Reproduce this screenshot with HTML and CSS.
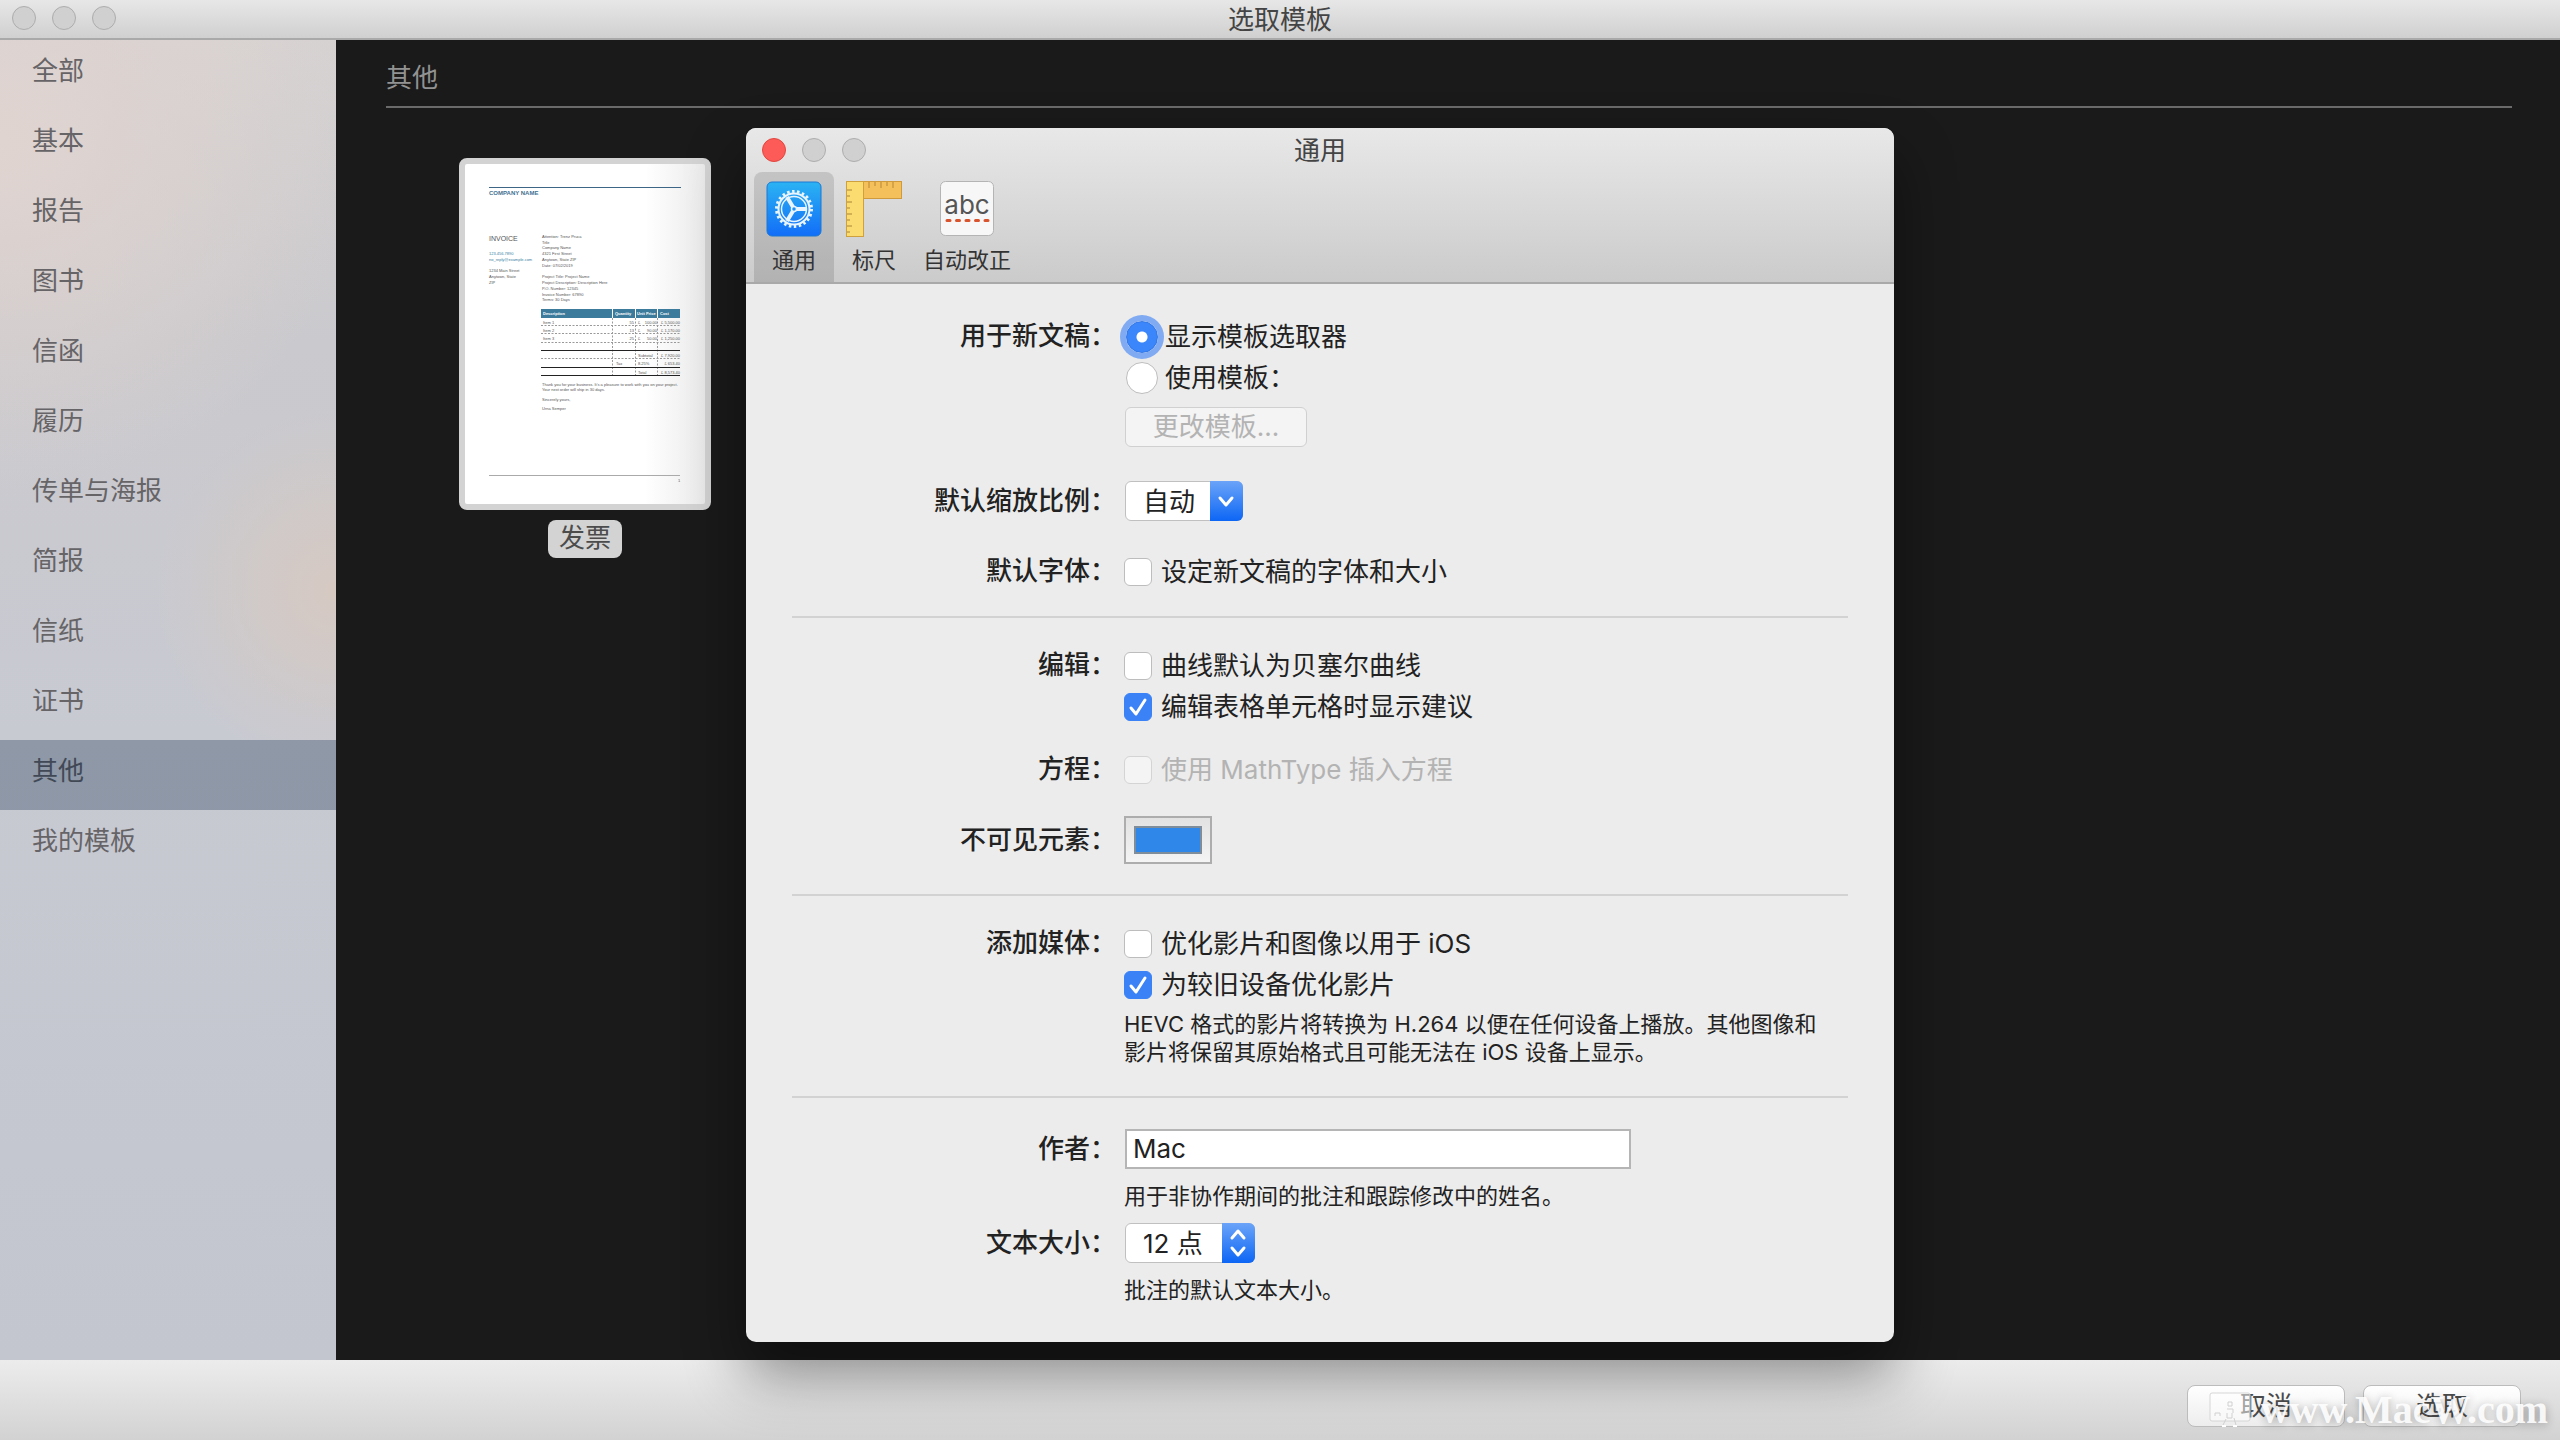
FILE: index.html
```
<!DOCTYPE html>
<html lang="zh-CN">
<head>
    <meta charset="UTF-8">
    <meta name="viewport" content="width=device-width, initial-scale=1.0">
    <title>选取模板</title>
    <link rel="stylesheet" href="styles.css">
</head>
<body>

<div class="window">
    <header class="titlebar">
        <div class="lights"><span></span><span></span><span></span></div>
        <h1>选取模板</h1>
    </header>

    <div class="content">
        <nav class="sidebar">
            <ul>
                <li><a href="#">全部</a></li>
                <li><a href="#">基本</a></li>
                <li><a href="#">报告</a></li>
                <li><a href="#">图书</a></li>
                <li><a href="#">信函</a></li>
                <li><a href="#">履历</a></li>
                <li><a href="#">传单与海报</a></li>
                <li><a href="#">简报</a></li>
                <li><a href="#">信纸</a></li>
                <li><a href="#">证书</a></li>
                <li><a href="#" class="active">其他</a></li>
                <li><a href="#">我的模板</a></li>
            </ul>
        </nav>

        <main class="templates">
            <h2>其他</h2>
            <figure class="template">
                <svg class="paper" viewBox="0 0 240 340">
                    <defs>
                        <linearGradient id="paperShade">
                            <stop offset="0.75" stop-color="#fff"/>
                            <stop offset="1" stop-color="#ebebeb"/>
                        </linearGradient>
                    </defs>
                    <rect width="240" height="340" fill="url(#paperShade)"/>
                    <path d="M24 23.5H216" stroke="#3d6585"/>
                    <text x="24" y="31" font-size="6" font-weight="bold" fill="#3f7192">COMPANY NAME</text>
                    <text x="24" y="77" font-size="7" fill="#555">INVOICE</text>
                    <g fill="#3a7f9f">
                        <text x="24" y="91">123.456.7890</text>
                        <text x="24" y="97">no_reply@example.com</text>
                    </g>
                    <text x="24" y="108">1234 Main Street</text>
                    <text x="24" y="114">Anytown, State</text>
                    <text x="24" y="120">ZIP</text>

                    <text x="77" y="74">Attention: Trenz Pruca</text>
                    <text x="77" y="80">Title</text>
                    <text x="77" y="85">Company Name</text>
                    <text x="77" y="91">4321 First Street</text>
                    <text x="77" y="97">Anytown, State ZIP</text>
                    <text x="77" y="103">Date: 07/02/2019</text>
                    <text x="77" y="114">Project Title: Project Name</text>
                    <text x="77" y="120">Project Description: Description Here</text>
                    <text x="77" y="126">P.O. Number: 12345</text>
                    <text x="77" y="132">Invoice Number: 67890</text>
                    <text x="77" y="137">Terms: 30 Days</text>

                    <rect x="76" y="145" width="139" height="9" fill="#3c7b9c"/>
                    <path d="M147.5 145v9M170.5 145v9M192.5 145v9" stroke="#fff"/>
                    <g fill="#fff" font-weight="bold">
                        <text x="78" y="151">Description</text>
                        <text x="150" y="151">Quantity</text>
                        <text x="172" y="151">Unit Price</text>
                        <text x="195" y="151">Cost</text>
                    </g>
                    <g stroke="#999" stroke-dasharray="2 1.5">
                        <path d="M76 161.5H215M76 169.5H215M76 178.5H215M76 194.5H215"/>
                        <path d="M147.5 154v58M170.5 154v58M192.5 154v58"/>
                    </g>
                    <path d="M76 186.5H215M76 203.5H215M76 211.5H215" stroke="#222"/>
                    <text x="78" y="160">Item 1</text>
                    <text x="78" y="168">Item 2</text>
                    <text x="78" y="176">Item 3</text>
                    <g text-anchor="end">
                        <text x="169" y="160">55</text>
                        <text x="169" y="168">13</text>
                        <text x="169" y="176">25</text>
                        <text x="192" y="160">100.00</text>
                        <text x="192" y="168">90.00</text>
                        <text x="192" y="176">50.00</text>
                        <text x="215" y="160">£ 5,500.00</text>
                        <text x="215" y="168">£ 1,170.00</text>
                        <text x="215" y="176">£ 1,250.00</text>
                        <text x="215" y="193">£ 7,920.00</text>
                        <text x="215" y="201">£ 653.40</text>
                        <text x="215" y="210">£ 8,573.40</text>
                    </g>
                    <text x="173" y="160">£</text>
                    <text x="173" y="168">£</text>
                    <text x="173" y="176">£</text>
                    <text x="173" y="193">Subtotal</text>
                    <text x="151" y="201">Tax</text>
                    <text x="173" y="201">8.25%</text>
                    <text x="173" y="210">Total</text>

                    <text x="77" y="222">Thank you for your business. It’s a pleasure to work with you on your project.</text>
                    <text x="77" y="227">Your next order will ship in 30 days.</text>
                    <text x="77" y="237">Sincerely yours,</text>
                    <text x="77" y="246">Urna Semper</text>
                    <path d="M24 311.5H215" stroke="#aaa"/>
                    <text x="213" y="318">1</text>
                </svg>
                <figcaption>发票</figcaption>
            </figure>
        </main>
    </div>

    <footer class="bottombar">
        <button type="button">取消</button>
        <button type="button">选取</button>
        <div class="watermark">
            <svg viewBox="0 0 42 36" width="42" height="36">
                <rect x="1" y="1" width="40" height="28" rx="2" fill="#fff" fill-opacity="0.5" stroke="#d6d6d6"/>
                <path d="M19 10h4v4h-4zM18 17h6v4M18 21v5h5v-5M6 24v-3h5v3M14 33l3-6M27 33l-2-7" fill="none" stroke="#d0d0d0"/>
                <path d="M13 34h4M24 34h4" stroke="#fff" stroke-width="2"/>
            </svg>
            <span>www.MacW.com</span>
        </div>
    </footer>
</div>

<section class="prefs">
    <header class="prefs-head">
        <div class="prefs-title">
            <div class="lights"><span class="close"></span><span></span><span></span></div>
            <h1>通用</h1>
        </div>
        <div class="tabs">
            <button type="button" class="tab active">
                <svg viewBox="0 0 56 56">
                    <defs>
                        <linearGradient id="blueTile" x2="0" y2="1">
                            <stop offset="0" stop-color="#2bb3f3"/>
                            <stop offset="1" stop-color="#126df8"/>
                        </linearGradient>
                    </defs>
                    <rect x="1" y="1" width="54" height="54" rx="5" fill="url(#blueTile)" stroke="#1b79d6"/>
                    <g fill="none" stroke="#e8f4ff">
                        <circle cx="28" cy="28" r="17.5" stroke-width="3" stroke-dasharray="2.5 2.5"/>
                        <circle cx="28" cy="28" r="15.5" stroke-width="2"/>
                        <circle cx="28" cy="28" r="12.5" stroke-width="1.5"/>
                        <path d="M30 28h11M27 26l-6-10M27 30l-6 10" stroke-width="4"/>
                        <circle cx="28" cy="28" r="2.5" fill="#2090f5" stroke-width="1.5"/>
                    </g>
                </svg>
                <span>通用</span>
            </button>
            <button type="button" class="tab">
                <svg viewBox="0 0 56 56">
                    <rect x="17.5" y="0.5" width="38" height="17" fill="#f3c05c" stroke="#cf9a3c"/>
                    <path d="M23 1v6M29 1v4M35 1v6M41 1v4M47 1v6" stroke="#b98632"/>
                    <rect x="0.5" y="0.5" width="17" height="55" fill="#fbdc70" stroke="#cfa03e"/>
                    <path d="M1 9h5M1 15h3M1 21h5M1 27h3M1 33h5M1 39h3M1 45h5M1 51h3" stroke="#a98438"/>
                </svg>
                <span>标尺</span>
            </button>
            <button type="button" class="tab">
                <svg viewBox="0 0 56 56">
                    <rect x="1.5" y="0.5" width="53" height="54" rx="5" fill="#f7f7f7" stroke="#b4b4b4"/>
                    <text x="28" y="33" class="abc">abc</text>
                    <path d="M8 39.5h42" stroke="#d9532c" stroke-width="3" stroke-linecap="round" stroke-dasharray="3 6.5"/>
                </svg>
                <span>自动改正</span>
            </button>
        </div>
    </header>

    <form class="prefs-body">
        <div class="group">
            <div class="row">
                <div class="label">用于新文稿：</div>
                <div class="field">
                    <label class="radio"><input type="radio" name="newdoc" checked>显示模板选取器</label>
                    <label class="radio"><input type="radio" name="newdoc">使用模板：</label>
                    <button type="button" class="change" disabled>更改模板...</button>
                </div>
            </div>
            <div class="row zoom-row">
                <label class="label" for="zoom">默认缩放比例：</label>
                <div class="select combo">
                    <select id="zoom"><option>自动</option></select>
                    <svg viewBox="0 0 33 40"><path d="M10 17l6 7 6-7"/></svg>
                </div>
            </div>
            <div class="row">
                <div class="label">默认字体：</div>
                <div class="field">
                    <label class="check"><input type="checkbox">设定新文稿的字体和大小</label>
                </div>
            </div>
        </div>

        <div class="group">
            <div class="row">
                <div class="label">编辑：</div>
                <div class="field">
                    <label class="check"><input type="checkbox">曲线默认为贝塞尔曲线</label>
                    <label class="check"><input type="checkbox" checked>编辑表格单元格时显示建议</label>
                </div>
            </div>
            <div class="row equation-row">
                <div class="label">方程：</div>
                <div class="field">
                    <label class="check disabled"><input type="checkbox" disabled>使用 MathType 插入方程</label>
                </div>
            </div>
            <div class="row color-row">
                <label class="label" for="color">不可见元素：</label>
                <input type="color" id="color" value="#2f87e9">
            </div>
        </div>

        <div class="group">
            <div class="row">
                <div class="label">添加媒体：</div>
                <div class="field">
                    <label class="check"><input type="checkbox">优化影片和图像以用于 iOS</label>
                    <label class="check"><input type="checkbox" checked>为较旧设备优化影片</label>
                    <p class="hint">HEVC 格式的影片将转换为 H.264 以便在任何设备上播放。其他图像和影片将保留其原始格式且可能无法在 iOS 设备上显示。</p>
                </div>
            </div>
        </div>

        <div class="group author">
            <div class="row">
                <label class="label" for="author">作者：</label>
                <div class="field">
                    <input type="text" id="author" value="Mac">
                    <p class="hint">用于非协作期间的批注和跟踪修改中的姓名。</p>
                </div>
            </div>
            <div class="row">
                <label class="label" for="size">文本大小：</label>
                <div class="field">
                    <div class="select popup">
                        <select id="size"><option>12 点</option></select>
                        <svg viewBox="0 0 33 40"><path d="M10 15l6-7 6 7M10 25l6 7 6-7"/></svg>
                    </div>
                    <p class="hint">批注的默认文本大小。</p>
                </div>
            </div>
        </div>
    </form>
</section>

</body>
</html>
```
FILE: styles.css
```
* {
    box-sizing: border-box;
}

body {
    margin: 0;
    font-family: Inter, "Noto Sans CJK SC", sans-serif;
    font-size: 26px;
    line-height: 40px;
    color: #222;
}

h1, h2, p, ul, figure {
    margin: 0;
    padding: 0;
}

h1 {
    font-size: 26px;
    font-weight: normal;
    line-height: inherit;
    color: #444;
    text-align: center;
}

button, input, select {
    font: inherit;
    color: inherit;
    margin: 0;
}

/* Main window */
.window {
    display: flex;
    flex-direction: column;
    min-height: 100vh;
    background-color: #1a1a1a;
}

.titlebar {
    position: relative;
    height: 40px;
    background: linear-gradient(#e7e7e7, #d0d0d0);
    border-bottom: 2px solid #a9a9a9;
}

.lights {
    position: absolute;
    left: 12px;
    top: 6px;
    display: flex;
    gap: 16px;
}

.lights span {
    width: 24px;
    height: 24px;
    border-radius: 50%;
    background-color: #d0d0d0;
    border: 1px solid #adadad;
}

.lights .close {
    background-color: #fc5b57;
    border-color: #e2463f;
}

.content {
    flex: 1;
    display: flex;
}

.sidebar {
    width: 336px;
    background:
        radial-gradient(circle at 100% 550px, #d6c9c2, transparent 180px),
        radial-gradient(circle at 0 100px, #e0d4d0, transparent 360px),
        linear-gradient(#d6d2d2, #cac9cd 300px, #c8cad2 700px, #c3c5cf);
}

.sidebar ul {
    list-style: none;
}

.sidebar a {
    display: block;
    height: 70px;
    padding-left: 32px;
    line-height: 62px;
    color: #666467;
    text-decoration: none;
}

.sidebar a.active {
    background-color: rgba(70, 90, 115, 0.45);
    color: #414956;
}

.templates {
    flex: 1;
    padding: 18px 48px 0 50px;
}

.templates h2 {
    padding-bottom: 8px;
    border-bottom: 2px solid #6a6a6a;
    font-size: 26px;
    font-weight: normal;
    color: #929292;
}

.template {
    display: flex;
    flex-direction: column;
    align-items: center;
    gap: 10px;
    width: 252px;
    margin: 50px 0 0 73px;
}

.paper {
    width: 252px;
    height: 352px;
    border: 6px solid #d3d3d3;
    border-radius: 8px;
    background-color: #d3d3d3;
    font-family: "Liberation Sans", sans-serif;
    font-size: 4px;
    fill: #555;
}

.template figcaption {
    padding: 0 11px 2px;
    line-height: 36px;
    border-radius: 8px;
    background-color: #d3d3d3;
    color: #4c4c4c;
}

.bottombar {
    position: relative;
    display: flex;
    justify-content: flex-end;
    align-items: center;
    gap: 18px;
    height: 80px;
    padding: 12px 39px 0 0;
    background: linear-gradient(#ececec, #d2d2d2);
}

.bottombar button {
    width: 158px;
    height: 42px;
    padding: 0;
    border: 1px solid #bcbcbc;
    border-radius: 8px;
    background: linear-gradient(#fff, #ededed);
    color: #4a4a4a;
}

.watermark {
    position: absolute;
    right: 12px;
    bottom: 6px;
    display: flex;
    align-items: center;
    gap: 10px;
    font-family: "Liberation Serif", serif;
    font-size: 40px;
    font-weight: bold;
    line-height: 48px;
    color: rgba(255, 255, 255, 0.9);
    text-shadow: 0 2px 10px rgba(0, 0, 0, 0.3);
    pointer-events: none;
}

/* Preferences window */
.prefs {
    position: absolute;
    left: 746px;
    top: 128px;
    width: 1148px;
    border-radius: 10px;
    background-color: #ececec;
    box-shadow: 0 30px 60px rgba(0, 0, 0, 0.45);
}

.prefs-head {
    position: relative;
    border-radius: 10px 10px 0 0;
    background: linear-gradient(#e8e8e8, #cbcbcb);
    border-bottom: 2px solid #a9a9a9;
}

.prefs-title {
    height: 44px;
    line-height: 46px;
}

.prefs-title .lights {
    left: 16px;
    top: 10px;
}

.tabs {
    display: flex;
    padding-left: 8px;
}

.tab {
    display: flex;
    flex-direction: column;
    align-items: center;
    gap: 7px;
    min-width: 80px;
    height: 110px;
    padding: 9px 9px 0;
    border: none;
    border-radius: 8px 8px 0 0;
    background: none;
    font-size: 22px;
    line-height: 32px;
    color: #333;
}

.tab.active {
    background-color: rgba(0, 0, 0, 0.12);
}

.tab svg {
    width: 56px;
    height: 56px;
}

.abc {
    font-family: Inter, sans-serif;
    font-size: 26px;
    text-anchor: middle;
    fill: #555;
}

.prefs-body {
    padding: 0 46px 25px;
}

.group {
    padding: 27px 0 30px;
    border-bottom: 2px solid #d2d2d2;
}

.group:first-child {
    padding: 32px 0 24px;
}

.group:last-child {
    border-bottom: none;
    padding-bottom: 0;
}

.row {
    display: flex;
    gap: 8px;
}

.label {
    width: 324px;
    text-align: right;
    font-weight: 500;
}

.field {
    flex: 1;
}

.radio, .check {
    display: flex;
    align-items: center;
    height: 41px;
    gap: 9px;
}

.radio {
    padding-left: 2px;
    gap: 7px;
}

input[type="radio"] {
    appearance: none;
    width: 32px;
    height: 32px;
    border: 1px solid #bdbdbd;
    border-radius: 50%;
    background-color: #fff;
}

input[type="radio"]:checked {
    border: 1px solid #2f76e8;
    background: radial-gradient(circle, #fff 5px, #3b86fb 6px);
    box-shadow: 0 0 0 6px #80abf3;
}

input[type="checkbox"] {
    appearance: none;
    width: 28px;
    height: 28px;
    border: 1px solid #bdbdbd;
    border-radius: 6px;
    background-color: #fff;
}

input[type="checkbox"]:checked {
    border-color: #3b82f7;
    background: #3b82f7 url("data:image/svg+xml,%3Csvg xmlns='http://www.w3.org/2000/svg' viewBox='0 0 26 26'%3E%3Cpath d='M6 14l5 6 9-14' fill='none' stroke='%23fff' stroke-width='3' stroke-linecap='round' stroke-linejoin='round'/%3E%3C/svg%3E");
}

.check.disabled {
    color: #b3b3b3;
}

input[type="checkbox"]:disabled {
    background-color: #f4f4f4;
    border-color: #d4d4d4;
}

.change {
    display: block;
    width: 182px;
    height: 40px;
    margin: 9px 0 0 1px;
    padding: 0;
    border: 1px solid #d0d0d0;
    border-radius: 6px;
    background-color: #f4f4f4;
    line-height: 36px;
    color: #b3b3b3;
}

.zoom-row {
    margin: 34px 0 30px;
}

.select {
    position: relative;
    height: 40px;
    margin-left: 1px;
}

.combo {
    width: 118px;
}

.popup {
    width: 130px;
}

.select select {
    appearance: none;
    width: 100%;
    height: 40px;
    padding: 0 0 0 17px;
    border: 1px solid #c0c0c0;
    border-radius: 6px;
    background-color: #fff;
}

.select svg {
    position: absolute;
    right: 0;
    top: 0;
    width: 33px;
    height: 40px;
    border-radius: 0 6px 6px 0;
    background: linear-gradient(#6ba4f8, #0d66f5);
    fill: none;
    stroke: #fff;
    stroke-width: 3;
    stroke-linecap: round;
    stroke-linejoin: round;
    pointer-events: none;
}

.equation-row {
    margin: 22px 0 26px;
}

.color-row {
    align-items: center;
}

input[type="color"] {
    appearance: none;
    width: 88px;
    height: 48px;
    padding: 8px;
    border: 2px solid #adadad;
    background: linear-gradient(#e2e2e2, #f4f4f4);
}

input[type="color"]::-webkit-color-swatch-wrapper {
    padding: 0;
}

input[type="color"]::-webkit-color-swatch {
    border: 2px solid #7f8c99;
    border-radius: 0;
}

.hint {
    margin-top: 5px;
    padding-right: 16px;
    font-size: 22px;
    line-height: 28px;
}

input[type="text"] {
    display: block;
    width: 506px;
    height: 40px;
    margin-left: 1px;
    padding: 0 6px;
    border: 2px solid #b5b5b5;
    background-color: #fff;
}

.author {
    padding-top: 31px;
}

.author .hint {
    margin: 13px 0;
}
```
